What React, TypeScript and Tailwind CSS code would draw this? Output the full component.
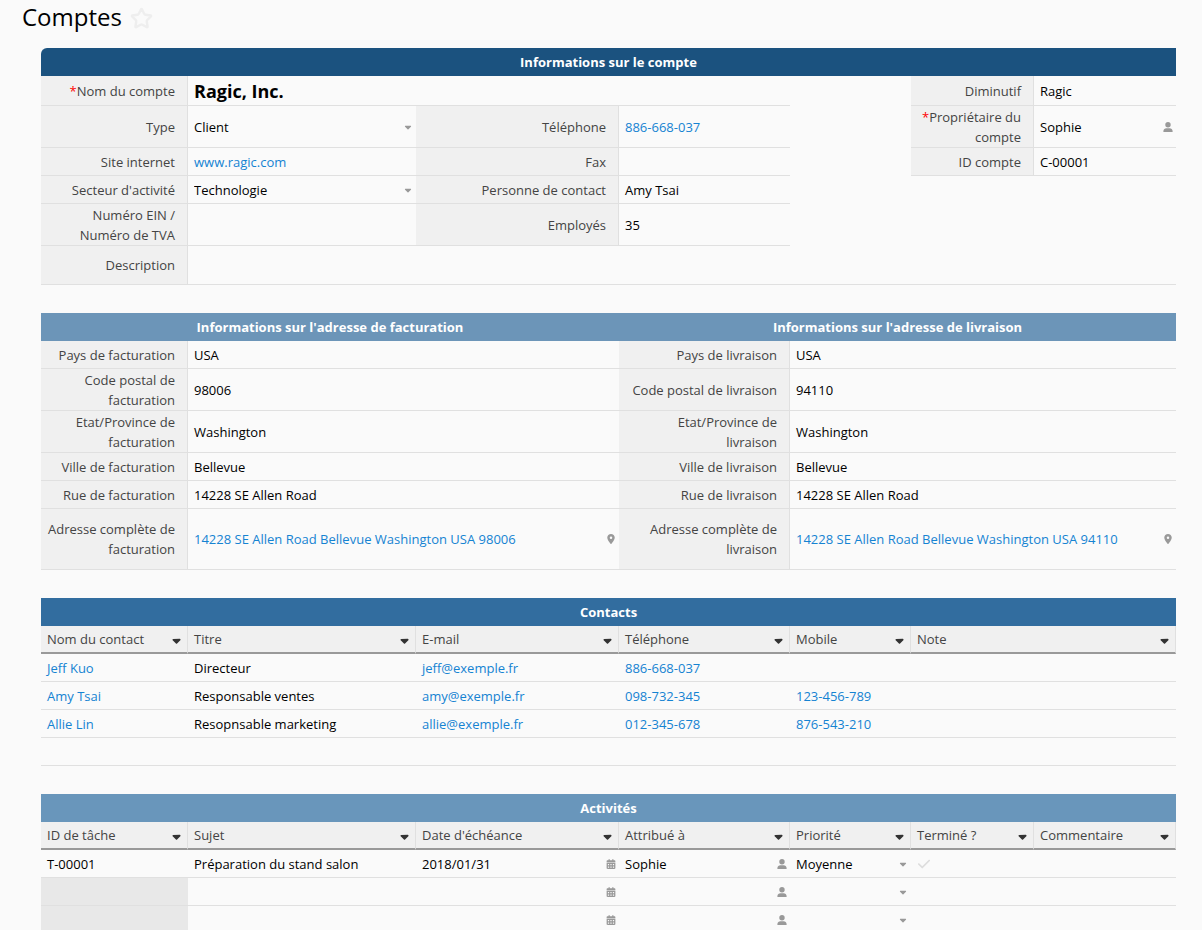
import type { ReactNode } from 'react';
import { Star } from 'lucide-react';
import { FaCalendarDays, FaCaretDown, FaCheck, FaLocationDot } from 'react-icons/fa6';

const edge = 'border-b border-[#e0e0e0]';

function Columns() {
  return (
    <colgroup>
      <col className="w-[147px]" />
      <col className="w-[228px]" />
      <col className="w-[203px]" />
      <col className="w-[171px]" />
      <col className="w-[121px]" />
      <col className="w-[123px]" />
      <col className="w-[142px]" />
    </colgroup>
  );
}

function PersonIcon() {
  return (
    <svg viewBox="0 0 10 10" className="size-2.5" fill="currentColor" aria-hidden="true">
      <circle cx="5" cy="2.7" r="2.7" />
      <path d="M.4 10V9C.4 7.3 1.8 6.2 3.4 6.2H6.6C8.2 6.2 9.6 7.3 9.6 9V10Z" />
    </svg>
  );
}

function Sheet({ label, children }: { label: string; children: ReactNode }) {
  return (
    <table aria-label={label} className="w-full table-fixed border-separate border-spacing-0">
      <Columns />
      {children}
    </table>
  );
}

function Bar({ span, color, children }: { span: number; color: string; children: ReactNode }) {
  return (
    <th scope="colgroup" colSpan={span} className={`h-7 p-0 text-center font-bold text-white ${color}`}>
      {children}
    </th>
  );
}

function FieldLabel({ htmlFor, required, children }: { htmlFor?: string; required?: boolean; children: ReactNode }) {
  return (
    <th
      scope="row"
      className="border-r border-b border-[#e0e0e0] bg-[#f0f0f0] py-0 pr-3 pl-1.5 text-right font-normal text-[#444]"
    >
      {required && <span className="text-[#f00]">*</span>}
      {htmlFor ? <label htmlFor={htmlFor}>{children}</label> : children}
    </th>
  );
}

function Value({ span = 1, children }: { span?: number; children?: ReactNode }) {
  return (
    <td colSpan={span} className={`${edge} py-0 pr-[3px] pl-1.5`}>
      {children}
    </td>
  );
}

function Link({ href, children }: { href: string; children: ReactNode }) {
  return (
    <a href={href} className="text-[#1583d2]">
      {children}
    </a>
  );
}

function Choice({ id, label, value, options }: { id: string; label?: string; value: string; options: string[] }) {
  return (
    <div className="grid items-center">
      <select
        id={id}
        aria-label={label}
        defaultValue={value}
        className="col-start-1 row-start-1 w-full appearance-none bg-transparent outline-none"
      >
        {options.map((option) => (
          <option key={option}>{option}</option>
        ))}
      </select>
      <FaCaretDown className="pointer-events-none col-start-1 row-start-1 size-2.5 justify-self-end text-[#999]" />
    </div>
  );
}

function WithButton({ label, icon, children }: { label: string; icon: ReactNode; children?: ReactNode }) {
  return (
    <div className="flex items-center justify-between">
      <span>{children}</span>
      <button type="button" aria-label={label} className="text-[10px] text-[#999]">
        {icon}
      </button>
    </div>
  );
}

function HeaderRow({ titles }: { titles: { text: string; span?: number }[] }) {
  return (
    <tr className="h-7">
      {titles.map(({ text, span }) => (
        <th
          key={text}
          scope="col"
          colSpan={span}
          className="border-r border-b-2 border-r-[#e0e0e0] border-b-[#999] bg-[#f0f0f0] py-0 pr-1 pl-1.5 text-left font-normal text-[#444]"
        >
          <div className="flex items-center justify-between">
            {text}
            <button type="button" aria-label={`Options : ${text}`} className="pt-0.5 text-[13px] text-[#333]">
              <FaCaretDown />
            </button>
          </div>
        </th>
      ))}
    </tr>
  );
}

const addresses = [
  { height: 'h-7', name: 'Pays', billing: 'USA', shipping: 'USA' },
  { height: 'h-[42px]', name: 'Code postal', billing: '98006', shipping: '94110' },
  { height: 'h-[42px]', name: 'Etat/Province', billing: 'Washington', shipping: 'Washington' },
  { height: 'h-7', name: 'Ville', billing: 'Bellevue', shipping: 'Bellevue' },
  { height: 'h-7', name: 'Rue', billing: '14228 SE Allen Road', shipping: '14228 SE Allen Road' },
];

const contacts = [
  { name: 'Jeff Kuo', title: 'Directeur', email: 'jeff@exemple.fr', phone: '886-668-037', mobile: '' },
  { name: 'Amy Tsai', title: 'Responsable ventes', email: 'amy@exemple.fr', phone: '098-732-345', mobile: '123-456-789' },
  { name: 'Allie Lin', title: 'Resopnsable marketing', email: 'allie@exemple.fr', phone: '012-345-678', mobile: '876-543-210' },
];

const tasks = [
  { id: 'T-00001', subject: 'Préparation du stand salon', due: '2018/01/31', owner: 'Sophie', priority: 'Moyenne' },
  { id: '', subject: '', due: '', owner: '', priority: '' },
  { id: '', subject: '', due: '', owner: '', priority: '' },
];

export default function App() {
  return (
    <div className="min-h-screen bg-[#fafafa] pr-[26px] font-['Open_Sans',sans-serif] text-[13px] leading-5 text-black">
      <header className="flex h-12 items-start gap-2 pt-px pl-[22px]">
        <h1 className="text-2xl leading-8">Comptes</h1>
        <button type="button" aria-label="Ajouter aux favoris" className="pt-1.5 text-[#eee]">
          <Star size={23} strokeWidth={2.5} />
        </button>
      </header>

      <main className="flex flex-col gap-7 pl-[41px]">
        <Sheet label="Compte">
          <thead>
            <tr>
              <Bar span={7} color="rounded-tl-md bg-[#1b527f]">
                Informations sur le compte
              </Bar>
            </tr>
          </thead>
          <tbody>
            <tr className="h-[30px]">
              <FieldLabel required>Nom du compte</FieldLabel>
              <Value span={3}>
                <strong className="text-lg leading-6 font-bold">Ragic, Inc.</strong>
              </Value>
              <td />
              <FieldLabel>Diminutif</FieldLabel>
              <Value>Ragic</Value>
            </tr>
            <tr className="h-[42px]">
              <FieldLabel htmlFor="type">Type</FieldLabel>
              <Value>
                <Choice id="type" value="Client" options={['Client', 'Prospect', 'Partenaire']} />
              </Value>
              <FieldLabel>Téléphone</FieldLabel>
              <Value>
                <Link href="tel:886668037">886-668-037</Link>
              </Value>
              <td />
              <FieldLabel required>Propriétaire du compte</FieldLabel>
              <Value>
                <WithButton label="Choisir le propriétaire" icon={<PersonIcon />}>
                  Sophie
                </WithButton>
              </Value>
            </tr>
            <tr className="h-7">
              <FieldLabel>Site internet</FieldLabel>
              <Value>
                <Link href="#site">www.ragic.com</Link>
              </Value>
              <FieldLabel>Fax</FieldLabel>
              <Value />
              <td />
              <FieldLabel>ID compte</FieldLabel>
              <Value>C-00001</Value>
            </tr>
            <tr className="h-7">
              <FieldLabel htmlFor="secteur">Secteur d'activité</FieldLabel>
              <Value>
                <Choice id="secteur" value="Technologie" options={['Technologie', 'Finance', 'Industrie']} />
              </Value>
              <FieldLabel>Personne de contact</FieldLabel>
              <Value>Amy Tsai</Value>
              <td colSpan={3} />
            </tr>
            <tr className="h-[42px]">
              <FieldLabel>
                Numéro EIN /<br />
                Numéro de TVA
              </FieldLabel>
              <Value />
              <FieldLabel>Employés</FieldLabel>
              <Value>35</Value>
              <td colSpan={3} />
            </tr>
            <tr className="h-[39px]">
              <FieldLabel>Description</FieldLabel>
              <Value span={6} />
            </tr>
          </tbody>
        </Sheet>

        <Sheet label="Adresses">
          <thead>
            <tr>
              <Bar span={3} color="bg-[#6c95b8]">
                Informations sur l'adresse de facturation
              </Bar>
              <Bar span={4} color="bg-[#6c95b8]">
                Informations sur l'adresse de livraison
              </Bar>
            </tr>
          </thead>
          <tbody>
            {addresses.map((row) => (
              <tr key={row.name} className={row.height}>
                <FieldLabel>{`${row.name} de facturation`}</FieldLabel>
                <Value span={2}>{row.billing}</Value>
                <FieldLabel>{`${row.name} de livraison`}</FieldLabel>
                <Value span={3}>{row.shipping}</Value>
              </tr>
            ))}
            <tr className="h-[61px]">
              <FieldLabel>Adresse complète de facturation</FieldLabel>
              <Value span={2}>
                <WithButton label="Carte de facturation" icon={<FaLocationDot />}>
                  <Link href="#facturation">14228 SE Allen Road Bellevue Washington USA 98006</Link>
                </WithButton>
              </Value>
              <FieldLabel>Adresse complète de livraison</FieldLabel>
              <Value span={3}>
                <WithButton label="Carte de livraison" icon={<FaLocationDot />}>
                  <Link href="#livraison">14228 SE Allen Road Bellevue Washington USA 94110</Link>
                </WithButton>
              </Value>
            </tr>
          </tbody>
        </Sheet>

        <Sheet label="Contacts">
          <thead>
            <tr>
              <Bar span={7} color="bg-[#326d9f]">
                Contacts
              </Bar>
            </tr>
            <HeaderRow
              titles={[
                { text: 'Nom du contact' },
                { text: 'Titre' },
                { text: 'E-mail' },
                { text: 'Téléphone' },
                { text: 'Mobile' },
                { text: 'Note', span: 2 },
              ]}
            />
          </thead>
          <tbody>
            {contacts.map((contact) => (
              <tr key={contact.name} className="h-7">
                <Value>
                  <Link href="#contact">{contact.name}</Link>
                </Value>
                <Value>{contact.title}</Value>
                <Value>
                  <Link href={`mailto:${contact.email}`}>{contact.email}</Link>
                </Value>
                <Value>
                  <Link href={`tel:${contact.phone}`}>{contact.phone}</Link>
                </Value>
                <Value>{contact.mobile && <Link href={`tel:${contact.mobile}`}>{contact.mobile}</Link>}</Value>
                <Value span={2} />
              </tr>
            ))}
            <tr className="h-7">
              <Value span={7} />
            </tr>
          </tbody>
        </Sheet>

        <Sheet label="Activités">
          <thead>
            <tr>
              <Bar span={7} color="bg-[#6996bb]">
                Activités
              </Bar>
            </tr>
            <HeaderRow
              titles={[
                { text: 'ID de tâche' },
                { text: 'Sujet' },
                { text: "Date d'échéance" },
                { text: 'Attribué à' },
                { text: 'Priorité' },
                { text: 'Terminé ?' },
                { text: 'Commentaire' },
              ]}
            />
          </thead>
          <tbody>
            {tasks.map((task, index) => (
              <tr key={index} className="h-7">
                {task.id ? <Value>{task.id}</Value> : <td className={`${edge} bg-[#e8e8e8]`} />}
                <Value>{task.subject}</Value>
                <Value>
                  <WithButton label="Choisir la date" icon={<FaCalendarDays />}>
                    {task.due}
                  </WithButton>
                </Value>
                <Value>
                  <WithButton label="Choisir la personne" icon={<PersonIcon />}>
                    {task.owner}
                  </WithButton>
                </Value>
                <Value>
                  <Choice
                    id={`priorite-${index}`}
                    label="Priorité"
                    value={task.priority}
                    options={['', 'Haute', 'Moyenne', 'Basse']}
                  />
                </Value>
                <Value>
                  {task.id && (
                    <div className="grid size-3.5 items-center">
                      <input
                        type="checkbox"
                        aria-label="Terminé ?"
                        className="col-start-1 row-start-1 size-3.5 appearance-none"
                      />
                      <FaCheck className="pointer-events-none col-start-1 row-start-1 size-3.5 text-[#ddd]" />
                    </div>
                  )}
                </Value>
                <Value />
              </tr>
            ))}
          </tbody>
        </Sheet>
      </main>
    </div>
  );
}
